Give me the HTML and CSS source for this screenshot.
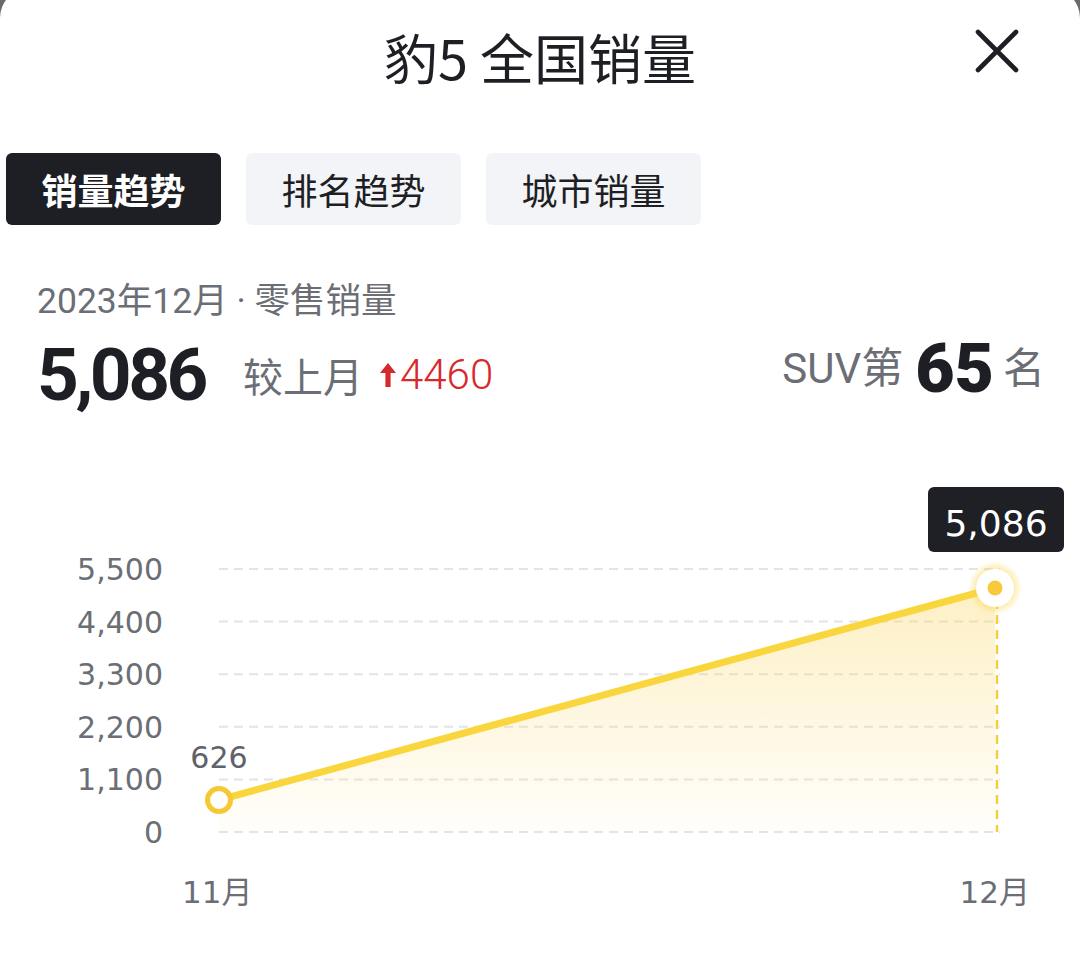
FILE: index.html
```html
<!DOCTYPE html>
<html lang="zh">
<head>
<meta charset="utf-8">
<link rel="stylesheet" href="styles.css">
</head>
<body>
<div class="sheet">
  <header class="header">
    <h1 class="title">豹5 全国销量</h1>
    <button class="close" aria-label="关闭">
      <svg viewBox="0 0 44 44" width="44" height="44"><path d="M3 3 L41 41 M41 3 L3 41" stroke="#1d1f24" stroke-width="4.6" stroke-linecap="round" fill="none"/></svg>
    </button>
  </header>

  <nav class="tabs">
    <div class="tab active">销量趋势</div>
    <div class="tab">排名趋势</div>
    <div class="tab">城市销量</div>
  </nav>

  <div class="subtitle">2023年12月 · 零售销量</div>

  <div class="stats">
    <div class="stat-left">
      <span class="big-num">5,086</span>
      <span class="cmp-label">较上月</span>
      <svg class="up-arrow" viewBox="0 0 16 24" width="16" height="24"><path d="M8 0 L16 10 H10.6 V24 H5.4 V10 H0 Z" fill="#d7282c"/></svg>
      <span class="cmp-value">4460</span>
    </div>
    <div class="stat-right">
      <span class="rank-label">SUV第</span>
      <span class="rank-num">65</span>
      <span class="rank-label">名</span>
    </div>
  </div>

  <svg class="chart" viewBox="0 0 1080 470" width="1080" height="470">
    <defs>
      <linearGradient id="area" x1="0" y1="128" x2="0" y2="372" gradientUnits="userSpaceOnUse">
        <stop offset="0" stop-color="#fbd764" stop-opacity="0.38"/>
        <stop offset="1" stop-color="#fbd764" stop-opacity="0.03"/>
      </linearGradient>
      <radialGradient id="glow">
        <stop offset="0.6" stop-color="#fbd246" stop-opacity="0.55"/>
        <stop offset="1" stop-color="#fbd246" stop-opacity="0"/>
      </radialGradient>
    </defs>
    <g class="grid">
      <line x1="219" y1="109" x2="1000" y2="109"/>
      <line x1="219" y1="161.6" x2="1000" y2="161.6"/>
      <line x1="219" y1="214.2" x2="1000" y2="214.2"/>
      <line x1="219" y1="266.8" x2="1000" y2="266.8"/>
      <line x1="219" y1="319.4" x2="1000" y2="319.4"/>
      <line x1="219" y1="372" x2="1000" y2="372"/>
    </g>
    <g class="ylabels">
      <text x="163" y="120">5,500</text>
      <text x="163" y="172.6">4,400</text>
      <text x="163" y="225.2">3,300</text>
      <text x="163" y="277.8">2,200</text>
      <text x="163" y="330.4">1,100</text>
      <text x="163" y="383">0</text>
    </g>
    <polygon points="219,340 995,128 995,372 219,372" fill="url(#area)"/>
    <line x1="997" y1="140" x2="997" y2="372" class="vline"/>
    <line x1="219" y1="340" x2="995" y2="128" class="series"/>
    <circle cx="219" cy="340" r="11.5" fill="#fff" stroke="#f6c834" stroke-width="5"/>
    <circle cx="995" cy="128" r="27" fill="url(#glow)"/>
    <circle cx="995" cy="128" r="19" fill="#fff"/>
    <circle cx="995" cy="128" r="7.5" fill="#f8c93a"/>
    <text x="219" y="308" class="ptlabel">626</text>
    <rect x="928" y="27" width="136" height="65" rx="6" fill="#1e2026"/>
    <text x="996" y="76" class="tip">5,086</text>
    <text x="182" y="443" class="xlabel">11月</text>
    <text x="1030" y="443" class="xlabel end">12月</text>
  </svg>
</div>
</body>
</html>
```

FILE: styles.css
```css
* { box-sizing: border-box; }
html, body { margin: 0; padding: 0; }
body {
  background: #6a6a6a;
  width: 1080px;
  height: 964px;
  overflow: hidden;
  font-family: "Noto Sans CJK SC", "Noto Sans", sans-serif;
}
.sheet {
  margin-top: -12px;
  padding-top: 12px;
  background: #fff;
  border-radius: 30px 30px 0 0;
  height: 976px;
}
.header {
  position: relative;
  height: 114px;
  display: flex;
  align-items: center;
  justify-content: center;
}
.title {
  margin: 0;
  font-size: 54px;
  font-weight: 400;
  color: #1d1f24;
  line-height: 1;
}
.close {
  position: absolute;
  right: 61px;
  top: 29px;
  width: 44px;
  height: 44px;
  padding: 0;
  border: 0;
  background: none;
}
.close svg { display: block; }
.tabs {
  display: flex;
  gap: 25px;
  margin-top: 39px;
  padding-left: 6px;
}
.tab {
  width: 215px;
  height: 72px;
  border-radius: 6px;
  background: #f3f4f7;
  color: #1d1f24;
  font-size: 36px;
  display: flex;
  align-items: center;
  justify-content: center;
  line-height: 1;
}
.tab.active {
  background: #1d1f24;
  color: #fff;
  font-weight: 700;
}
.subtitle {
  margin-top: 52px;
  padding-left: 37px;
  font-family: "Roboto", "Noto Sans CJK SC", sans-serif;
  font-size: 35.5px;
  line-height: 48px;
  color: #6b6e75;
}
.stats {
  height: 100px;
  display: flex;
  align-items: center;
  justify-content: space-between;
  padding: 0 35px 0 37px;
}
.stat-left, .stat-right {
  display: flex;
  align-items: center;
}
.big-num {
  font-family: "Roboto", sans-serif;
  font-weight: 700;
  font-size: 73px;
  letter-spacing: -3.5px;
  color: #1d1f24;
  line-height: 1;
  margin-right: 38px;
}
.cmp-label {
  font-size: 40px;
  color: #6b6e75;
  line-height: 1;
  margin-right: 17px;
}
.up-arrow { display: block; margin-right: 4px; }
.cmp-value {
  font-family: "Roboto", sans-serif;
  font-weight: 300;
  font-size: 42px;
  color: #d7282c;
  line-height: 1;
}
.stat-right { margin-top: -12px; }
.rank-label {
  font-family: "Roboto", "Noto Sans CJK SC", sans-serif;
  font-size: 42px;
  color: #6b6e75;
  line-height: 1;
}
.rank-num {
  font-family: "Roboto", sans-serif;
  font-weight: 900;
  font-size: 68px;
  color: #1d1f24;
  line-height: 1;
  margin: 0 9px 0 12px;
}
.chart {
  display: block;
  margin-top: 35px;
}
.grid line {
  stroke: #e4e4e6;
  stroke-width: 2;
  stroke-dasharray: 9 6;
}
.ylabels text {
  font-family: "DejaVu Sans", sans-serif;
  font-size: 30px;
  fill: #6b6e75;
  text-anchor: end;
}
.series {
  stroke: #f9d63e;
  stroke-width: 7;
  stroke-linecap: round;
}
.vline {
  stroke: #f6cd3c;
  stroke-width: 2.5;
  stroke-dasharray: 9 6;
}
.ptlabel {
  font-family: "DejaVu Sans", sans-serif;
  font-size: 30px;
  fill: #5f626a;
  text-anchor: middle;
}
.tip {
  font-family: "DejaVu Sans", sans-serif;
  font-size: 36px;
  fill: #fff;
  text-anchor: middle;
}
.xlabel {
  font-family: "DejaVu Sans", "Noto Sans CJK SC", sans-serif;
  font-size: 31px;
  fill: #6b6e75;
}
.xlabel.end { text-anchor: end; }
```
